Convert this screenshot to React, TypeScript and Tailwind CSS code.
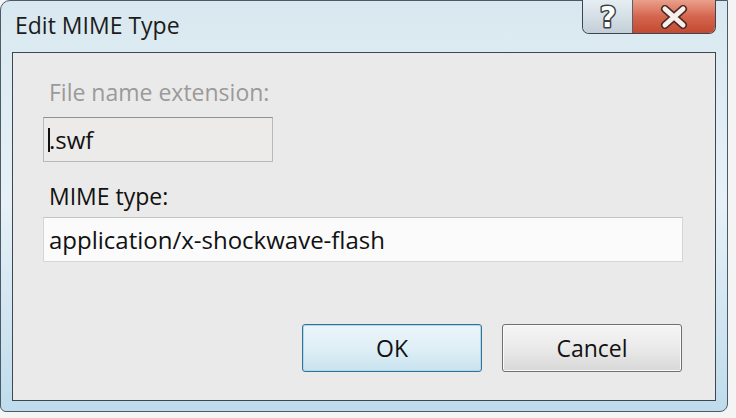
import { useState } from "react";

export default function App() {
  const [ext, setExt] = useState(".swf");
  const [mime, setMime] = useState("application/x-shockwave-flash");

  return (
    <div className="w-[736px] h-[418px] bg-[#f4f4f4] overflow-hidden font-['Open_Sans',sans-serif]">
      {/* WINDOW FRAME */}
      <div className="relative w-[728px] h-[412px] rounded-tl-[10px] rounded-bl-[6px] rounded-br-[8px] border border-[#4b5a66] bg-gradient-to-b from-[#d9e8f0] via-[#e6f0f6] to-[#bfdcec] flex flex-col px-[11px] pb-[10px]">
        {/* TITLE BAR */}
        <div className="h-[51px] flex items-start pt-[9px] pl-[3px]">
          <span className="text-[23px] leading-[30px] text-[#1c1c1c]">Edit MIME Type</span>
        </div>

        {/* CAPTION BUTTONS */}
        <div className="absolute top-[-1px] left-[581px] flex h-[34px] border border-t-0 border-[#3b4650] rounded-b-[7px] overflow-hidden">
          <div className="w-[50px] flex items-center justify-center bg-gradient-to-b from-[#e6eef3] via-[#d5dfe6] to-[#c3ced6] border-r border-[#56616a]">
            <svg width="30" height="32" viewBox="0 0 30 32" className="overflow-visible">
              <text
                x="15"
                y="26"
                textAnchor="middle"
                fontFamily="DejaVu Sans, sans-serif"
                fontWeight="bold"
                fontSize="28"
                fill="#ffffff"
                stroke="#3a3f44"
                strokeWidth="3"
                strokeLinejoin="round"
                paintOrder="stroke"
              >
                ?
              </text>
            </svg>
          </div>
          <div className="w-[82px] flex items-center justify-center bg-gradient-to-b from-[#e9a08c] via-[#d5654e] to-[#c24a30]">
            <svg width="30" height="24" viewBox="0 0 30 24">
              <path d="M6 4 L24 20 M24 4 L6 20" stroke="#4a2a22" strokeWidth="8" strokeLinecap="round" />
              <path d="M6 4 L24 20 M24 4 L6 20" stroke="#f7efeb" strokeWidth="5" strokeLinecap="round" />
            </svg>
          </div>
        </div>

        {/* CLIENT AREA */}
        <div className="flex-1 border border-[#3d4850] bg-[#ebeaea] flex flex-col pl-[30px] pr-[31px]">
          <label className="mt-[24px] pl-[6px] text-[23px] leading-[30px] text-[#9a9a9a]">File name extension:</label>
          <div className="relative mt-[10px] w-[230px]">
            <input
              value={ext}
              onChange={(e) => setExt(e.target.value)}
              className="w-full h-[45px] px-[5px] text-[24px] text-[#111] bg-[#ecebea] border border-[#b9b9b9] border-t-[#8f8f8f] outline-none"
            />
            <span className="absolute left-[5px] top-[11px] w-[1.5px] h-[24px] bg-[#111]" />
          </div>
          <label className="mt-[19px] pl-[6px] text-[23px] leading-[30px] text-[#111]">MIME type:</label>
          <input
            value={mime}
            onChange={(e) => setMime(e.target.value)}
            className="mt-[6px] w-[640px] h-[45px] px-[5px] text-[24px] text-[#111] bg-[#fbfbfb] border border-[#d6d6d6] border-t-[#c4c4c4] outline-none"
          />

          {/* ACTIONS */}
          <div className="mt-auto mb-[28px] flex justify-end gap-[20px] pr-[2px]">
            <button className="w-[180px] h-[48px] rounded-[3px] border border-[#3c6f8f] bg-gradient-to-b from-[#eaf6fb] via-[#dfeff6] to-[#c9e3ef] shadow-[0_0_0_1px_#a7dcf0_inset] text-[23px] text-[#111]">
              OK
            </button>
            <button className="w-[180px] h-[48px] rounded-[3px] border border-[#6f6f6f] bg-gradient-to-b from-[#f5f5f5] via-[#eaeaea] to-[#d8d8d8] shadow-[0_0_0_1px_#fafafa_inset] text-[23px] text-[#111]">
              Cancel
            </button>
          </div>
        </div>
      </div>
    </div>
  );
}
